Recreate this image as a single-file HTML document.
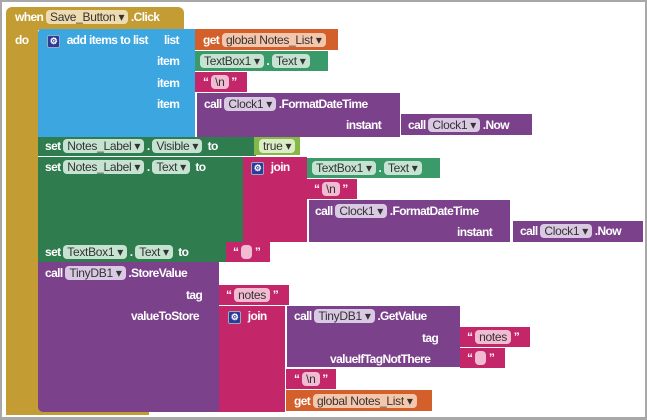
<!DOCTYPE html>
<html><head><meta charset="utf-8"><style>
body{margin:0;width:647px;height:419px;overflow:hidden;background:#fff;font-family:"Liberation Sans",sans-serif;}
.fr{position:absolute;left:0;top:0;width:643px;height:415px;border:2px solid #a8a8a8;border-bottom-width:3px;background:#fff}
.b{position:absolute;}
.t{position:absolute;color:#fff;font-size:12px;font-weight:bold;letter-spacing:-0.6px;white-space:nowrap;line-height:14px}
.p{display:inline-block;border-radius:4px;padding:0 4px;font-weight:normal;line-height:14px;letter-spacing:-0.3px;font-size:12px}
.ev{background:#c39c33}.bl{background:#3ba6df}.or{background:#d3602b}.gr{background:#3b9a6a}.dg{background:#2f7c4e}
.pk{background:#c4266a}.pu{background:#7b418b}.lg{background:#84b948}
.pev{background:#eedcb0;color:#333}.por{background:#f4c6ac;color:#333}.pgr{background:#c6e3d1;color:#333}.ppk{background:#f1bbd2;color:#333}.ppu{background:#dac9e2;color:#333}.plg{background:#dcecc4;color:#333}
.ico{display:inline-block;width:11px;height:11px;background:#2c3a9a;border-radius:2px;color:#fff;font-size:9px;text-align:center;line-height:11px;border:1px solid #9ab;margin-right:4px}
</style></head><body>
<div class="fr"></div>
<div class="b ev" style="left:6px;top:7px;width:178px;height:23px;border-radius:6px 6px 0 0"></div>
<div class="b ev" style="left:6px;top:28px;width:32px;height:385px"></div>
<div class="b ev" style="left:6px;top:403px;width:143px;height:12px"></div>
<div class="t" style="left:15px;top:10px">when <span class="p pev">Save_Button ▾</span> .Click</div>
<div class="t" style="left:15px;top:33px">do</div>
<div class="b bl" style="left:38px;top:29px;width:157px;height:108px;border-radius:4px 0 0 0"></div>
<div class="t" style="left:47px;top:33px"><span class="ico">⚙</span> add items to list</div>
<div class="t" style="left:164px;top:33px">list</div>
<div class="t" style="left:157px;top:54px">item</div>
<div class="t" style="left:157px;top:76px">item</div>
<div class="t" style="left:157px;top:97px">item</div>
<div class="b or" style="left:195px;top:29px;width:143px;height:21px"></div>
<div class="t" style="left:203px;top:33px">get <span class="p por">global Notes_List ▾</span></div>
<div class="b gr" style="left:195px;top:51px;width:133px;height:20px"></div>
<div class="t" style="left:200px;top:54px"><span class="p pgr">TextBox1 ▾</span> . <span class="p pgr">Text ▾</span></div>
<div class="b pk" style="left:195px;top:72px;width:52px;height:20px"></div>
<div class="t" style="left:203px;top:75px">“ <span class="p ppk">\n</span> ”</div>
<div class="b pu" style="left:197px;top:93px;width:203px;height:44px"></div>
<div class="t" style="left:204px;top:97px">call <span class="p ppu">Clock1 ▾</span> .FormatDateTime</div>
<div class="t" style="left:346px;top:118px">instant</div>
<div class="b pu" style="left:401px;top:114px;width:131px;height:21px"></div>
<div class="t" style="left:408px;top:118px">call <span class="p ppu">Clock1 ▾</span> .Now</div>
<div class="b dg" style="left:38px;top:137px;width:218px;height:19px"></div>
<div class="t" style="left:45px;top:139px">set <span class="p pgr">Notes_Label ▾</span> . <span class="p pgr">Visible ▾</span> &nbsp;to</div>
<div class="b lg" style="left:254px;top:137px;width:46px;height:18px"></div>
<div class="t" style="left:259px;top:139px"><span class="p plg">true ▾</span></div>
<div class="b dg" style="left:38px;top:157px;width:205px;height:85px"></div>
<div class="t" style="left:45px;top:160px">set <span class="p pgr">Notes_Label ▾</span> . <span class="p pgr">Text ▾</span> &nbsp;to</div>
<div class="b pk" style="left:243px;top:157px;width:64px;height:85px"></div>
<div class="t" style="left:251px;top:160px"><span class="ico">⚙</span> join</div>
<div class="b gr" style="left:307px;top:158px;width:133px;height:20px"></div>
<div class="t" style="left:312px;top:161px"><span class="p pgr">TextBox1 ▾</span> . <span class="p pgr">Text ▾</span></div>
<div class="b pk" style="left:307px;top:179px;width:50px;height:20px"></div>
<div class="t" style="left:314px;top:182px">“ <span class="p ppk">\n</span> ”</div>
<div class="b pu" style="left:309px;top:200px;width:201px;height:42px"></div>
<div class="t" style="left:315px;top:204px">call <span class="p ppu">Clock1 ▾</span> .FormatDateTime</div>
<div class="t" style="left:457px;top:225px">instant</div>
<div class="b pu" style="left:513px;top:221px;width:130px;height:21px"></div>
<div class="t" style="left:520px;top:224px">call <span class="p ppu">Clock1 ▾</span> .Now</div>
<div class="b dg" style="left:38px;top:242px;width:190px;height:20px"></div>
<div class="t" style="left:45px;top:245px">set <span class="p pgr">TextBox1 ▾</span> . <span class="p pgr">Text ▾</span> &nbsp;to</div>
<div class="b pk" style="left:226px;top:242px;width:44px;height:20px"></div>
<div class="t" style="left:233px;top:245px">“ <span class="p ppk">&nbsp;</span> ”</div>
<div class="b pu" style="left:38px;top:262px;width:181px;height:150px;border-radius:0 0 0 5px"></div>
<div class="t" style="left:45px;top:266px">call <span class="p ppu">TinyDB1 ▾</span> .StoreValue</div>
<div class="t" style="left:186px;top:288px">tag</div>
<div class="t" style="left:131px;top:309px">valueToStore</div>
<div class="b pk" style="left:219px;top:285px;width:70px;height:20px"></div>
<div class="t" style="left:226px;top:288px">“ <span class="p ppk">notes</span> ”</div>
<div class="b pk" style="left:219px;top:306px;width:66px;height:106px"></div>
<div class="t" style="left:228px;top:309px"><span class="ico">⚙</span> join</div>
<div class="b pu" style="left:287px;top:306px;width:173px;height:61px"></div>
<div class="t" style="left:294px;top:309px">call <span class="p ppu">TinyDB1 ▾</span> .GetValue</div>
<div class="t" style="left:422px;top:331px">tag</div>
<div class="t" style="left:330px;top:352px">valueIfTagNotThere</div>
<div class="b pk" style="left:460px;top:327px;width:70px;height:20px"></div>
<div class="t" style="left:467px;top:330px">“ <span class="p ppk">notes</span> ”</div>
<div class="b pk" style="left:460px;top:348px;width:45px;height:20px"></div>
<div class="t" style="left:467px;top:351px">“ <span class="p ppk">&nbsp;</span> ”</div>
<div class="b pk" style="left:286px;top:369px;width:50px;height:20px"></div>
<div class="t" style="left:294px;top:372px">“ <span class="p ppk">\n</span> ”</div>
<div class="b or" style="left:286px;top:390px;width:146px;height:21px"></div>
<div class="t" style="left:294px;top:394px">get <span class="p por">global Notes_List ▾</span></div>
</body></html>
